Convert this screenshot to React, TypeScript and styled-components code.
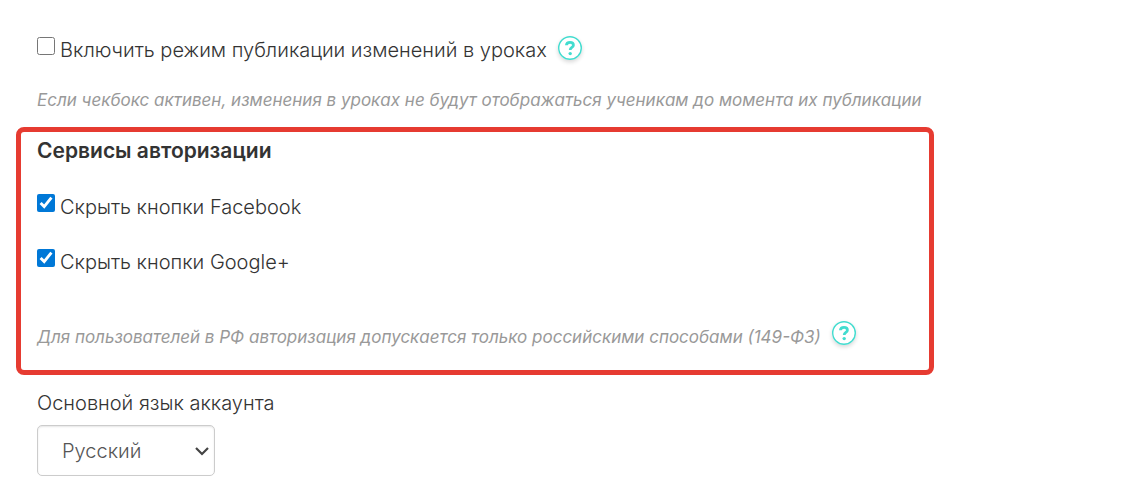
import React, { useId, useState } from "react";
import styled, { createGlobalStyle } from "styled-components";

const GlobalStyle = createGlobalStyle`
  *, *::before, *::after { box-sizing: border-box; }
  body {
    margin: 0;
    background: #fff;
    color: #333;
    font: 300 20px/24px Inter, "Open Sans", sans-serif;
  }
`;

const Page = styled.main`
  padding: 36px 16px 22px;
`;

const Section = styled.section`
  display: flex;
  flex-direction: column;
  gap: 26px;
  padding: 0 21px;
`;

const Highlight = styled.fieldset`
  display: flex;
  flex-direction: column;
  max-width: 918px;
  margin: 15px 0 16px;
  padding: 7px 16px 21px;
  border: 5px solid #e63b31;
  border-radius: 8px;
`;

const Title = styled.h2`
  margin: 0 0 30px;
  font-size: 21px;
  line-height: 24px;
  font-weight: 600;
`;

const Options = styled.div`
  display: flex;
  flex-direction: column;
  gap: 29px;
  margin-bottom: 47px;
`;

const CheckRow = styled.div`
  display: flex;
  align-items: flex-start;
  gap: 5px;
`;

const CheckLabel = styled.label`
  padding-top: 2px;
`;

const CheckBox = styled.input`
  flex: none;
  width: 18px;
  height: 18px;
  margin: 1px 0 0;
  accent-color: #0078d7;
`;

const HintRow = styled.div`
  display: flex;
  align-items: flex-start;
  gap: 5px;

  p { padding-top: 4px; }
`;

const Hint = styled.p`
  margin: 0;
  color: #999;
  font-size: 17px;
  font-weight: 400;
  font-style: italic;
`;

const HelpButton = styled.button`
  flex: none;
  width: 24px;
  height: 24px;
  margin-left: 6px;
  padding: 0;
  border: 0;
  border-radius: 50%;
  background: #fff;
  box-shadow: 0 2px 4px rgba(0, 0, 0, 0.16);
  cursor: pointer;

  svg { display: block; }
`;

const Field = styled.div`
  display: flex;
  flex-direction: column;
  align-items: flex-start;
  gap: 10px;
  padding: 0 21px;
`;

const SelectBox = styled.div`
  display: grid;
  align-items: center;
  width: 178px;

  > * { grid-area: 1 / 1; }

  svg {
    justify-self: end;
    margin-right: 5px;
    pointer-events: none;
  }
`;

const Select = styled.select`
  appearance: none;
  width: 100%;
  height: 51px;
  padding: 0 32px 0 24px;
  border: 1px solid #ccc;
  border-radius: 5px;
  background: #fff;
  box-shadow: inset 0 1px 2px rgba(0, 0, 0, 0.1);
  color: #555;
  font: inherit;
`;

function Help() {
  return (
    <HelpButton type="button" aria-label="Справка">
      <svg width="24" height="24" viewBox="0 0 24 24" fill="none" stroke="#42dccf">
        <circle cx="12" cy="12" r="11.3" strokeWidth="1.4" />
        <path d="M8.4 9.3C8.5 7.3 9.9 6.4 12 6.4s3.4 1 3.4 2.8c0 2.3-3.2 2.2-3.2 4.7" strokeWidth="2.8" />
        <circle cx="12.2" cy="17.6" r="1.7" fill="#42dccf" stroke="none" />
      </svg>
    </HelpButton>
  );
}

function Check({ label, initial, help }: { label: string; initial: boolean; help?: boolean }) {
  const id = useId();
  const [checked, setChecked] = useState(initial);
  return (
    <CheckRow>
      <CheckBox id={id} type="checkbox" checked={checked} onChange={(e) => setChecked(e.target.checked)} />
      <CheckLabel htmlFor={id}>{label}</CheckLabel>
      {help && <Help />}
    </CheckRow>
  );
}

export default function App() {
  return (
    <>
      <GlobalStyle />
      <Page>
        <Section>
          <Check label="Включить режим публикации изменений в уроках" initial={false} help />
          <Hint>Если чекбокс активен, изменения в уроках не будут отображаться ученикам до момента их публикации</Hint>
        </Section>
        <Highlight aria-labelledby="auth-title">
          <Title id="auth-title">Сервисы авторизации</Title>
          <Options>
            <Check label="Скрыть кнопки Facebook" initial />
            <Check label="Скрыть кнопки Google+" initial />
          </Options>
          <HintRow>
            <Hint>Для пользователей в РФ авторизация допускается только российскими способами (149-ФЗ)</Hint>
            <Help />
          </HintRow>
        </Highlight>
        <Field>
          <label htmlFor="language">Основной язык аккаунта</label>
          <SelectBox>
            <Select id="language" defaultValue="ru">
              <option value="ru">Русский</option>
              <option value="en">English</option>
            </Select>
            <svg width="16" height="10" viewBox="0 0 16 10" fill="none" stroke="#444" strokeWidth="2.2">
              <path d="M2 2l6 6 6-6" />
            </svg>
          </SelectBox>
        </Field>
      </Page>
    </>
  );
}
